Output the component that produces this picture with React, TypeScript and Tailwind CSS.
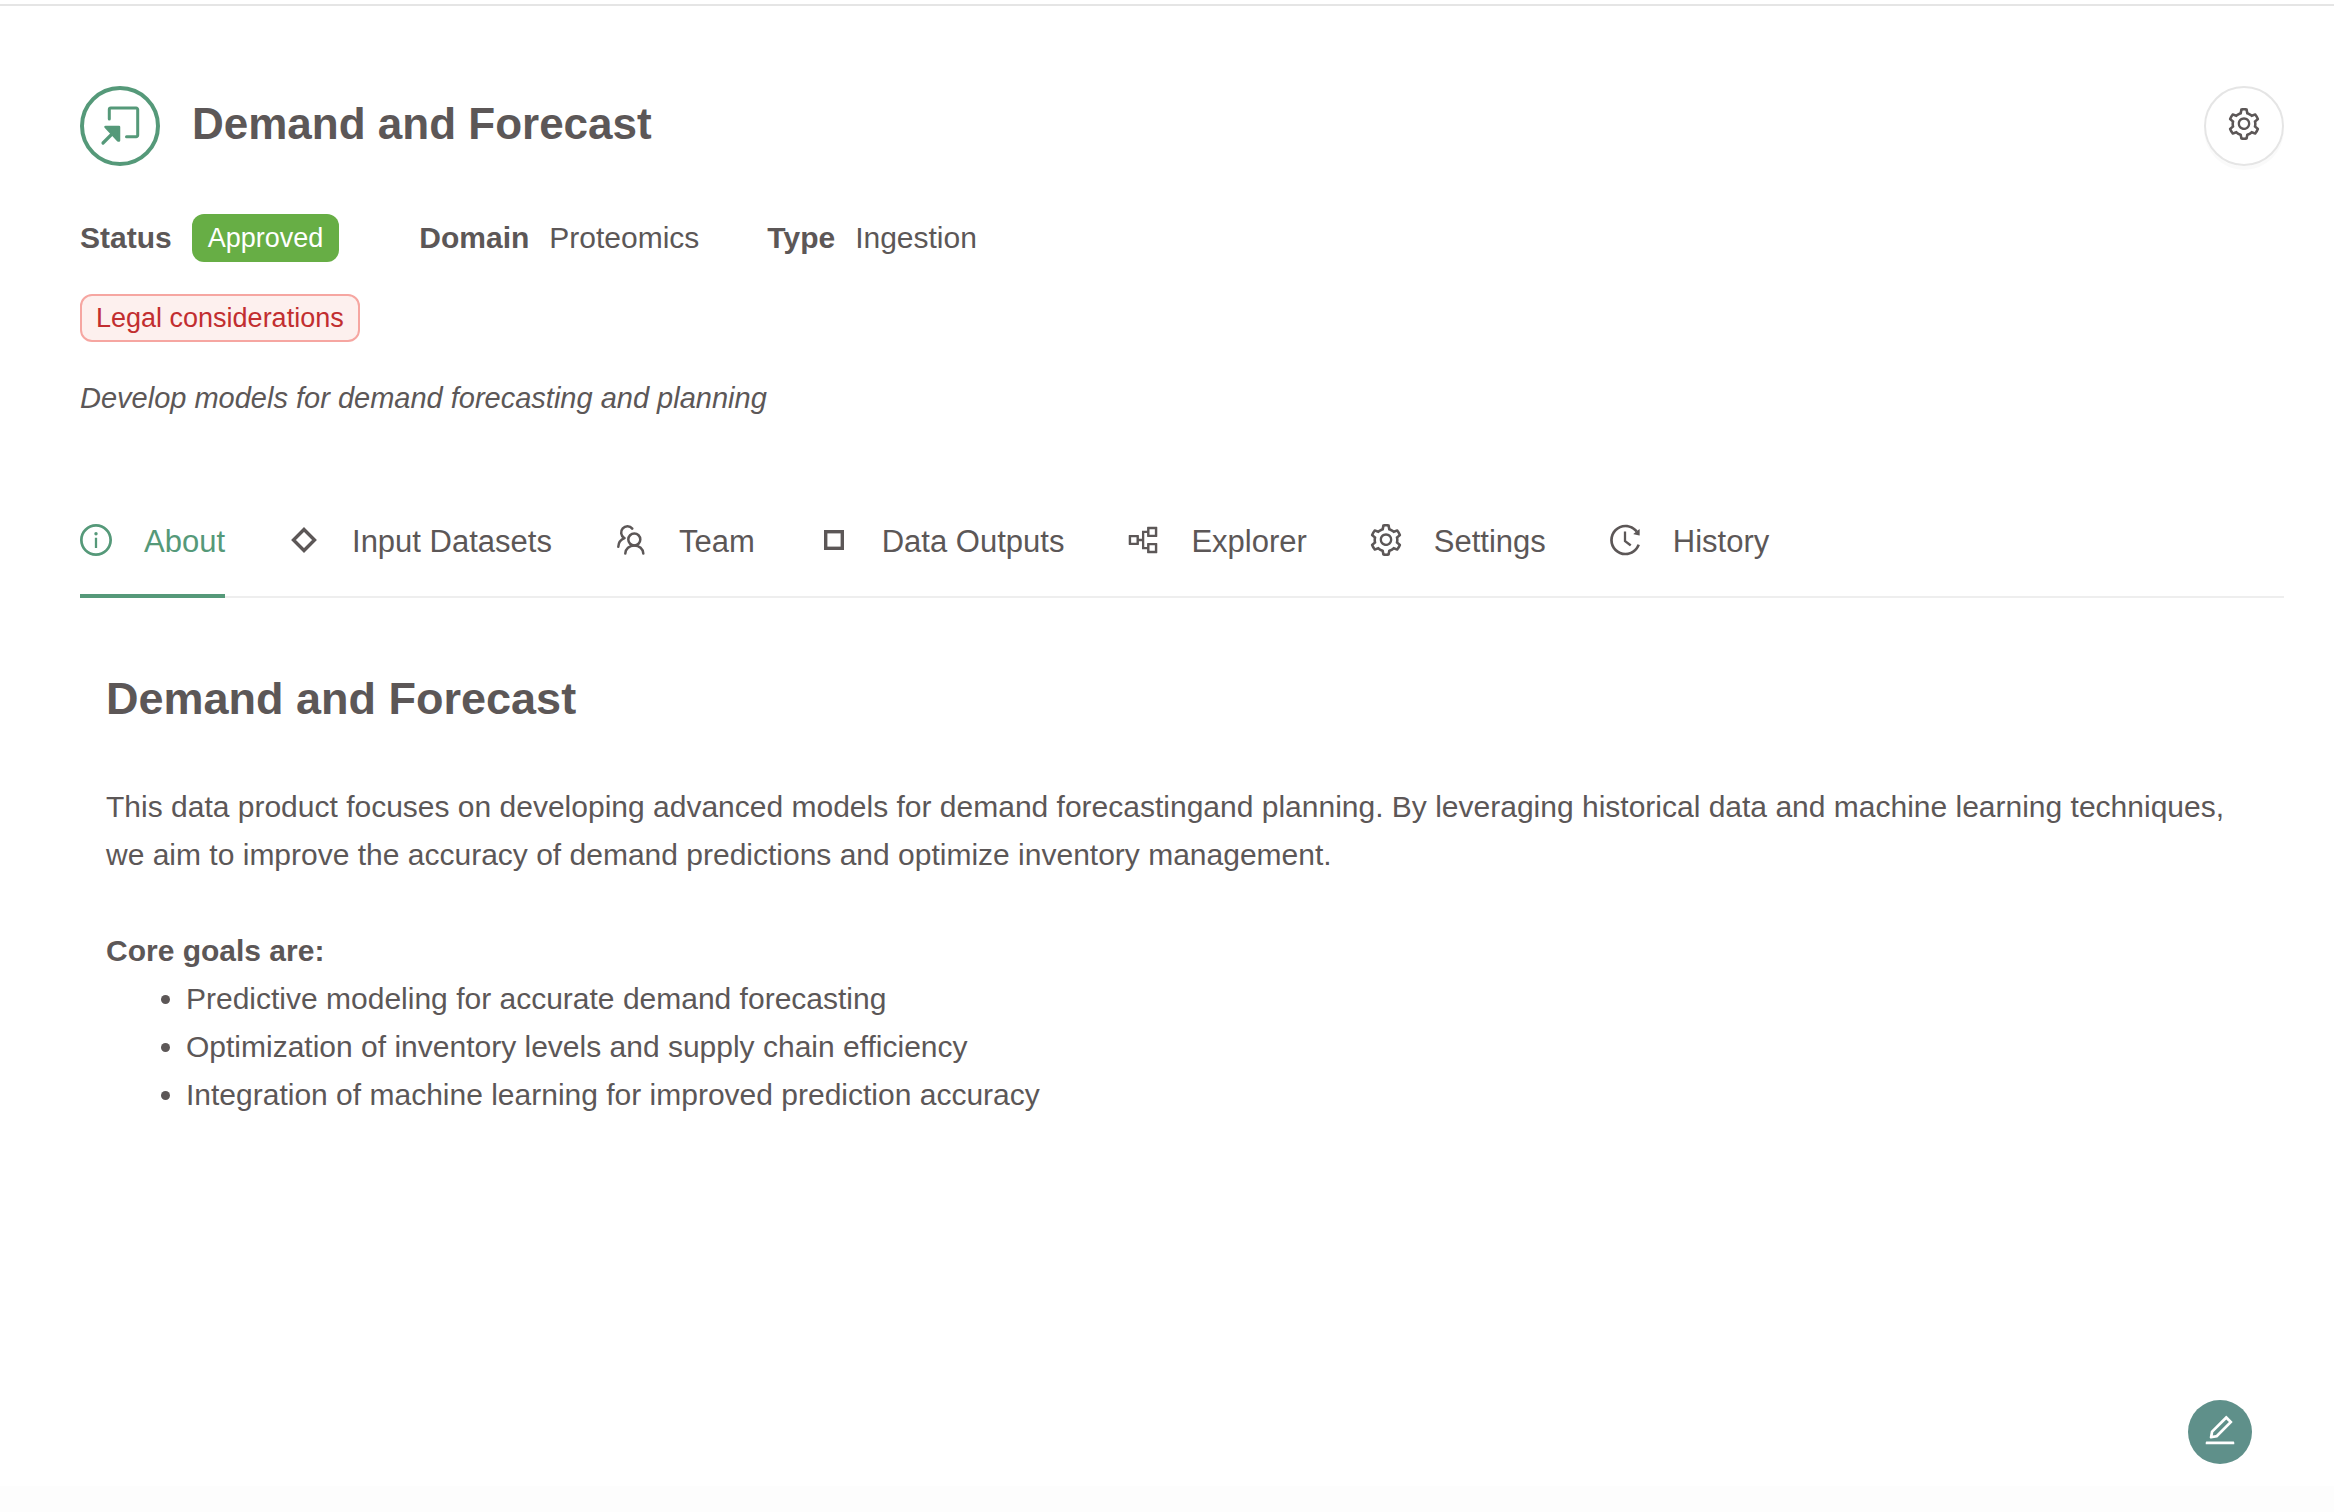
import type { ReactNode } from "react";
import {
  AiOutlineInfoCircle,
  AiOutlineSetting,
  AiOutlineHistory,
  AiOutlinePartition,
  AiOutlineEdit,
} from "react-icons/ai";

const GLYPH_BOX = "64 64 896 896";

function ProductIcon() {
  return (
    <svg viewBox="0 0 80 80" className="size-20 shrink-0" fill="none" stroke="#559979" aria-hidden="true">
      <circle cx="40" cy="40" r="38" strokeWidth="4" />
      <path d="M29.300 33V23.500a1.500 1.500 0 0 1 1.500-1.500h25.400a1.500 1.500 0 0 1 1.500 1.500v25.700a1.500 1.500 0 0 1-1.500 1.500H46.500" strokeWidth="3" strokeLinecap="round" />
      <path d="M23 57l12-12" strokeWidth="3.200" strokeLinecap="round" />
      <path d="M25.500 41h13.500v13.500h-1z" fill="#559979" strokeWidth="2.500" strokeLinejoin="round" />
    </svg>
  );
}

function DiamondIcon() {
  return (
    <svg viewBox="0 0 32 32" className="size-8" fill="none" stroke="currentColor" strokeWidth="3.400" aria-hidden="true">
      <path d="M16 5.500l10.500 10.500L16 26.500 5.500 16z" />
    </svg>
  );
}

function SquareIcon() {
  return (
    <svg viewBox="0 0 32 32" className="size-8" fill="none" stroke="currentColor" strokeWidth="3.400" aria-hidden="true">
      <rect x="7.700" y="7.700" width="16.600" height="16.600" />
    </svg>
  );
}

function TeamIcon() {
  return (
    <svg viewBox="0 0 32 32" className="size-8" fill="none" stroke="currentColor" strokeWidth="2.500" strokeLinecap="round" aria-hidden="true">
      <circle cx="19.300" cy="15.500" r="6" />
      <path d="M10.300 29.500c0.200-4.800 4-8 9-8s8.800 3.200 9 8" />
      <path d="M17.300 4.600A6.300 6.300 0 1 0 9 13.900" />
      <path d="M9.500 14.200c-3.500 1.300-6 4.300-6.200 8.600" />
    </svg>
  );
}

const tabs: { label: string; icon: ReactNode }[] = [
  { label: "About", icon: <AiOutlineInfoCircle viewBox={GLYPH_BOX} className="size-8" /> },
  { label: "Input Datasets", icon: <DiamondIcon /> },
  { label: "Team", icon: <TeamIcon /> },
  { label: "Data Outputs", icon: <SquareIcon /> },
  { label: "Explorer", icon: <AiOutlinePartition viewBox={GLYPH_BOX} className="size-8" /> },
  { label: "Settings", icon: <AiOutlineSetting viewBox={GLYPH_BOX} className="size-8" /> },
  { label: "History", icon: <AiOutlineHistory viewBox={GLYPH_BOX} className="size-8" /> },
];

const goals = [
  "Predictive modeling for accurate demand forecasting",
  "Optimization of inventory levels and supply chain efficiency",
  "Integration of machine learning for improved prediction accuracy",
];

export default function App() {
  return (
    <div className="flex min-h-screen flex-col bg-white pt-1 font-['Liberation_Sans',Arial,sans-serif] text-[30px] leading-[48px] text-[#5c5757]">
      <main className="flex flex-1 flex-col border-t-2 border-[#e5e5e5] pt-20 pr-[50px] pl-20">
        <header className="flex items-center justify-between">
          <div className="flex items-center gap-8">
            <ProductIcon />
            <h1 className="pb-1 text-[44px] leading-[56px] font-bold">Demand and Forecast</h1>
          </div>
          <button
            type="button"
            aria-label="Product settings"
            className="flex size-20 items-center justify-center rounded-full border-2 border-[#e5e5e5] pb-1 shadow-[0_4px_0_rgba(0,0,0,0.02)]"
          >
            <AiOutlineSetting viewBox={GLYPH_BOX} className="size-8" />
          </button>
        </header>

        <dl className="mt-12 flex items-center">
          <div className="mr-20 flex gap-5">
            <dt className="font-bold">Status</dt>
            <dd className="rounded-xl bg-[#67ae45] px-4 text-[27px] text-white">Approved</dd>
          </div>
          <div className="mr-[68px] flex gap-5">
            <dt className="font-bold">Domain</dt>
            <dd>Proteomics</dd>
          </div>
          <div className="flex gap-5">
            <dt className="font-bold">Type</dt>
            <dd>Ingestion</dd>
          </div>
        </dl>

        <div className="mt-8 flex">
          <span className="rounded-xl border-2 border-[#f6a6a1] bg-[#fdf0ee] px-3.5 text-[27px] leading-[44px] text-[#c22e30]">
            Legal considerations
          </span>
        </div>

        <p className="mt-8 text-[29px] italic">Develop models for demand forecasting and planning</p>

        <div role="tablist" className="mt-20 flex gap-[63px] border-b-2 border-[#eeeeee] text-[31px]">
          {tabs.map((tab, i) => (
            <button
              key={tab.label}
              type="button"
              role="tab"
              aria-selected={i === 0}
              className={
                i === 0
                  ? "-mb-0.5 flex items-center gap-8 border-b-4 border-[#559979] pt-4 pb-7 text-[#559979]"
                  : "-mb-0.5 flex items-center gap-8 border-b-4 border-transparent pt-4 pb-7"
              }
            >
              <span className="pb-1">{tab.icon}</span>
              {tab.label}
            </button>
          ))}
        </div>

        <article className="px-[26px] pt-[65px]">
          <h2 className="text-[45px] leading-[72px] font-bold">Demand and Forecast</h2>
          <p className="mt-12">
            This data product focuses on developing advanced models for demand forecastingand planning. By leveraging
            historical data and machine learning techniques, we aim to improve the accuracy of demand predictions and
            optimize inventory management.
          </p>
          <p className="mt-12 font-bold">Core goals are:</p>
          <ul className="list-disc pl-20">
            {goals.map((goal) => (
              <li key={goal}>{goal}</li>
            ))}
          </ul>
        </article>

        <div className="mt-auto flex justify-end pr-8 pb-[22px]">
          <button
            type="button"
            aria-label="Edit description"
            className="flex size-16 items-center justify-center rounded-full bg-[#5f908a] pb-1 text-white"
          >
            <AiOutlineEdit viewBox={GLYPH_BOX} className="size-8" />
          </button>
        </div>
      </main>
      <footer className="h-[26px] bg-[#fdfdfd]" />
    </div>
  );
}
